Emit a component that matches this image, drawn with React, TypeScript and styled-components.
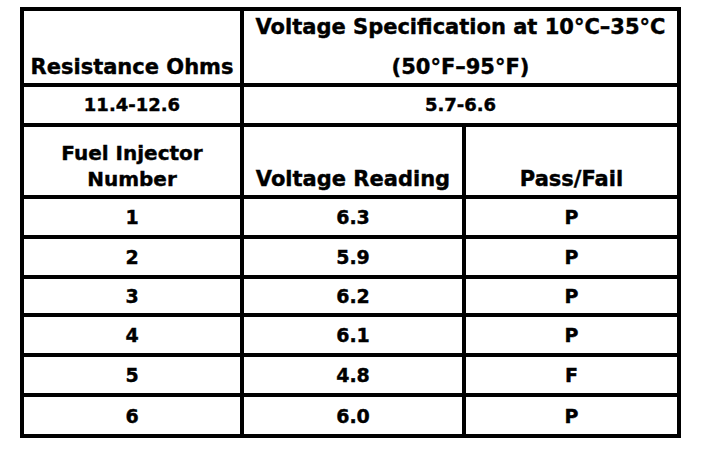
import React, { FC } from 'react';
import styled, { createGlobalStyle } from 'styled-components';

const GlobalStyle = createGlobalStyle`
  html,
  body {
    margin: 0;
    padding: 0;
    background: #ffffff;
  }

  body {
    font-family: 'DejaVu Sans', 'Liberation Sans', sans-serif;
    color: #000000;
  }
`;

const Page = styled.div`
  width: 704px;
  height: 452px;
  padding: 7px 0 0 20px;
  box-sizing: border-box;
`;

// the black background shows through the gaps and works as the rule lines
const SpecTable = styled.div`
  display: grid;
  grid-template-columns: 216px 218px 211px;
  grid-template-rows: 72px 36px 68px 36px 36px 34px 36px 36px 37px;
  gap: 4px;
  padding: 4px;
  width: max-content;
  background: #000000;
`;

const Cell = styled.div<{ $span?: number; $valign?: 'center' | 'end'; $size?: number }>`
  grid-column: span ${({ $span }) => $span || 1};
  background: #ffffff;
  display: flex;
  flex-direction: column;
  align-items: center;
  justify-content: ${({ $valign }) => ($valign === 'end' ? 'flex-end' : 'center')};
  padding-bottom: ${({ $valign }) => ($valign === 'end' ? '3px' : '0')};
  box-sizing: border-box;
  font-size: ${({ $size }) => $size || 19}px;
  font-weight: 700;
  line-height: 26px;
  text-align: center;
  white-space: nowrap;
  -webkit-text-stroke: 0.4px #000000;
`;

const SpecHeading = styled(Cell)`
  justify-content: space-between;
  padding-top: 3px;
`;

const rows = [
  ['1', '6.3', 'P'],
  ['2', '5.9', 'P'],
  ['3', '6.2', 'P'],
  ['4', '6.1', 'P'],
  ['5', '4.8', 'F'],
  ['6', '6.0', 'P'],
];

const App: FC = () => (
  <Page>
    <GlobalStyle />
    <SpecTable>
      <Cell $valign="end" $size={21}>
        Resistance Ohms
      </Cell>
      <SpecHeading $span={2} $valign="end" $size={21}>
        <span>Voltage Specification at 10°C–35°C</span>
        <span>(50°F–95°F)</span>
      </SpecHeading>

      <Cell $size={18}>11.4-12.6</Cell>
      <Cell $span={2} $size={18}>
        5.7-6.6
      </Cell>

      <Cell $valign="end" $size={20}>
        <span>Fuel Injector</span>
        <span>Number</span>
      </Cell>
      <Cell $valign="end" $size={21}>
        Voltage Reading
      </Cell>
      <Cell $valign="end" $size={21}>
        Pass/Fail
      </Cell>

      {rows.map((row, index) =>
        row.map((value, col) => <Cell key={`${index}-${col}`}>{value}</Cell>),
      )}
    </SpecTable>
  </Page>
);

export default App;
